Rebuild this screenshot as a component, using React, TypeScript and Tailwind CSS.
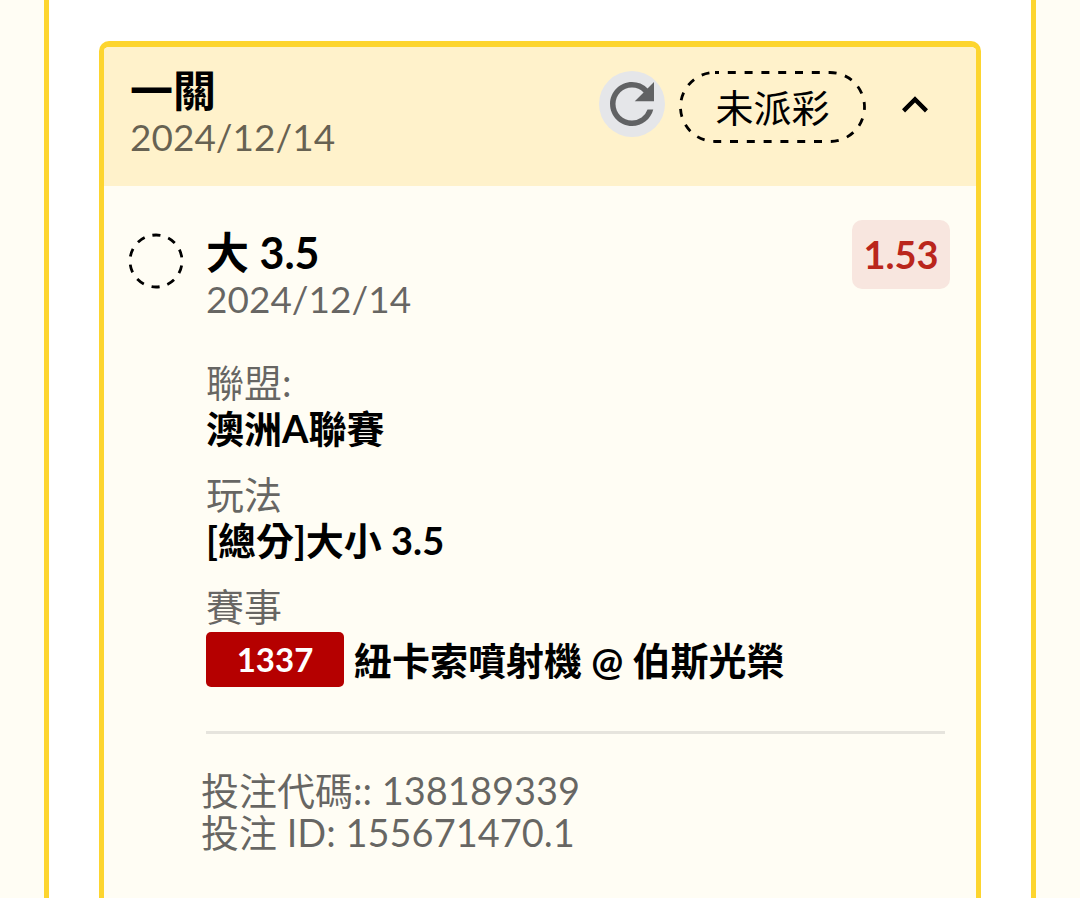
import React from 'react';
import { MdExpandLess, MdRefresh } from 'react-icons/md';

interface DetailProps {
  label: string;
  children: React.ReactNode;
}

const Detail: React.FC<DetailProps> = ({ label, children }) => (
  <div>
    <dt className="leading-[46px] text-black/60">{label}</dt>
    <dd className="leading-[46px] font-bold">{children}</dd>
  </div>
);

const StatusPill: React.FC<{ children: React.ReactNode }> = ({ children }) => (
  <div className="relative flex h-[72px] w-[187px] shrink-0 items-center justify-center">
    <svg className="absolute inset-0 h-full w-full" viewBox="0 0 187 72" fill="none" aria-hidden="true">
      <rect x="1.5" y="1.5" width="184" height="69" rx="34.5" stroke="black" strokeWidth="2.8" strokeDasharray="8 8.8" strokeDashoffset="4" />
    </svg>
    <span className="leading-[46px]">{children}</span>
  </div>
);

const PendingMark = () => (
  <svg className="mt-[13px] h-[56px] w-[56px] shrink-0" viewBox="0 0 56 56" fill="none" role="img" aria-label="未派彩">
    <circle cx="28" cy="28" r="26" stroke="black" strokeWidth="2.8" pathLength="100" strokeDasharray="5 5" transform="rotate(-98 28 28)" />
  </svg>
);

const App = () => {
  return (
    <div className="min-h-screen bg-[#fffdf4] px-11 font-['Lato','Noto_Sans_CJK_TC',sans-serif] text-[38px] text-black">
      <main className="min-h-screen border-x-[5px] border-[#fdd52f] bg-white px-[50px] pt-[41px]">
        <article className="min-h-[calc(100vh-41px)] overflow-hidden rounded-t-[10px] border-x-[5px] border-t-[6px] border-[#fdd52f] bg-[#fffdf4]">
          <header className="flex items-start justify-between bg-[#fff2cb] px-[26px] pt-[21px] pb-[26px]">
            <div>
              <h2 className="text-[43px] leading-[46px] font-bold">一關</h2>
              <time className="block text-[37px] leading-[46px] text-black/60" dateTime="2024-12-14">2024/12/14</time>
            </div>
            <div className="flex items-start gap-[14px] pt-[3px]">
              <button type="button" aria-label="重新整理" className="flex h-[66px] w-[66px] items-center justify-center rounded-full bg-[#e5e6e9] text-[#616264]">
                <MdRefresh size={66} />
              </button>
              <StatusPill>未派彩</StatusPill>
              <button type="button" aria-label="收合" aria-expanded="true" className="flex h-[68px] w-[70px] items-center justify-center">
                <MdExpandLess size={52} />
              </button>
            </div>
          </header>

          <section className="flex items-start gap-[22px] pt-[34px] pr-[26px] pl-[24px]">
            <PendingMark />
            <div className="flex-1">
              <div className="flex items-start justify-between">
                <div className="pt-[10px]">
                  <h3 className="text-[43px] leading-[46px] font-bold">大 3.5</h3>
                  <time className="block text-[37px] leading-[46px] text-black/60" dateTime="2024-12-14">2024/12/14</time>
                </div>
                <span className="w-[98px] rounded-[10px] bg-[#f8e6df] py-[12px] text-center leading-[45px] font-bold text-[#ba261c]">1.53</span>
              </div>
              <dl className="mt-[37px] flex flex-col gap-[20px]">
                <Detail label="聯盟:">澳洲A聯賽</Detail>
                <Detail label="玩法">[總分]大小 3.5</Detail>
                <Detail label="賽事">
                  <span className="flex items-center gap-[10px] pt-[3px]">
                    <span className="w-[138px] rounded-[5px] bg-[#b50000] text-center text-[33px] leading-[55px] text-white">1337</span>
                    <span>紐卡索噴射機 @ 伯斯光榮</span>
                  </span>
                </Detail>
              </dl>
              <hr className="mt-[44px] mr-[5px] border-t-[3px] border-[#e6e4dd]" />
            </div>
          </section>

          <footer className="mt-[35px] pb-11 pl-[97px] leading-[42px] text-black/60">
            <p>投注代碼:: 138189339</p>
            <p>投注 ID: 155671470.1</p>
          </footer>
        </article>
      </main>
    </div>
  );
};

export default App;
